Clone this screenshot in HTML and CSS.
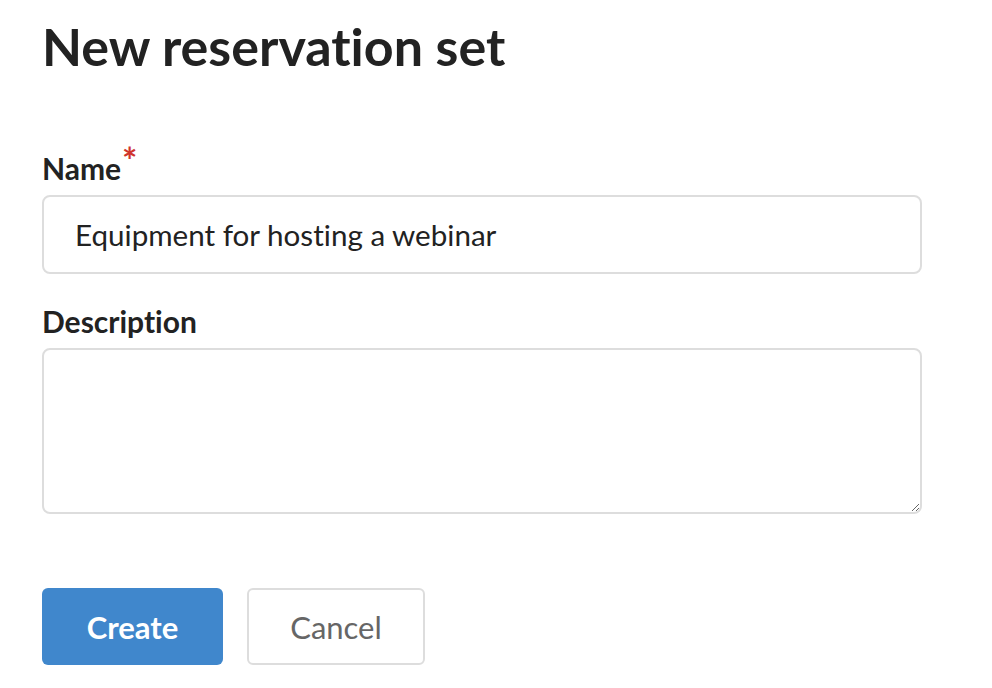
FILE: index.html
```html
<!DOCTYPE html>
<html lang="en">
<head>
<meta charset="utf-8">
<title>New reservation set</title>
<link rel="stylesheet" href="styles.css">
</head>
<body>
<main class="page">
  <h1 class="title">New reservation set</h1>
  <form class="form">
    <div class="field">
      <label class="label" for="name">Name<span class="req">*</span></label>
      <input class="input" id="name" type="text" value="Equipment for hosting a webinar">
    </div>
    <div class="field">
      <label class="label" for="desc">Description</label>
      <textarea class="textarea" id="desc"></textarea>
    </div>
    <div class="actions">
      <button class="btn btn-primary" type="button">Create</button>
      <button class="btn btn-secondary" type="button">Cancel</button>
    </div>
  </form>
</main>
</body>
</html>
```
FILE: styles.css
```css
html, body {
  margin: 0;
  padding: 0;
  background: #fff;
}
body {
  font-family: Lato, "Noto Sans", sans-serif;
  color: #222;
  font-variant-ligatures: none;
}
.page {
  padding: 10px 70px 0 42px;
  width: 880px;
}
.title {
  font-size: 52px;
  font-weight: 700;
  margin: 0;
  line-height: 72px;
  color: #222;
  font-variant-ligatures: none;
}
.form {
  margin-top: 71px;
}
.field {
  display: flex;
  flex-direction: column;
}
.field + .field {
  margin-top: 32px;
}
.label {
  font-size: 30px;
  font-weight: 700;
  line-height: 30px;
  margin-bottom: 12px;
  color: #222;
}
.req {
  color: #d0342c;
  font-size: 36px;
  font-weight: 700;
  position: relative;
  top: -6px;
  margin-left: 1px;
  line-height: 0;
}
.input, .textarea {
  box-sizing: border-box;
  width: 880px;
  border: 2px solid #dddddd;
  border-radius: 8px;
  font-family: Lato, "Noto Sans", sans-serif;
  font-size: 29.6px;
  color: #222;
  background: #fff;
  outline: none;
  font-variant-ligatures: none;
}
.input {
  height: 79px;
  padding: 0 31px;
}
.textarea {
  height: 166px;
  padding: 14px 31px;
  resize: vertical;
  display: block;
}
.actions {
  display: flex;
  gap: 24px;
  margin-top: 74px;
}
.btn {
  box-sizing: border-box;
  height: 77px;
  border-radius: 6px;
  font-family: Lato, "Noto Sans", sans-serif;
  font-size: 31px;
  cursor: pointer;
}
.btn-primary {
  width: 181px;
  background: #4087cc;
  color: #fff;
  border: none;
  font-weight: 700;
}
.btn-secondary {
  width: 178px;
  background: #fff;
  color: #666;
  border: 2px solid #dddddd;
  font-weight: 400;
}
```
